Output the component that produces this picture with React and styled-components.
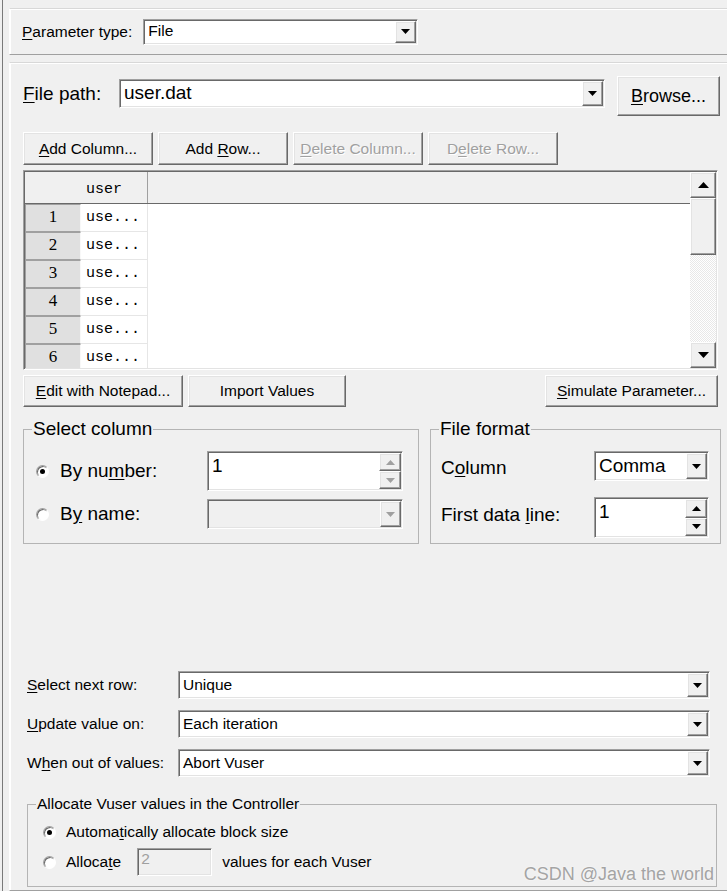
import React from "react";
import styled, { createGlobalStyle, css } from "styled-components";

const GlobalStyle = createGlobalStyle`
  html, body {
    margin: 0;
    padding: 0;
    background: #f0f0f0;
  }
  body {
    font-family: "Liberation Sans", Arial, sans-serif;
    color: #000;
  }
`;

const raised = css`
  border: 1px solid;
  border-color: #ffffff #696969 #696969 #ffffff;
  box-shadow: inset -1px -1px #a0a0a0, inset 1px 1px #e3e3e3;
`;

const sunken = css`
  border: 1px solid;
  border-color: #a0a0a0 #ffffff #ffffff #a0a0a0;
  box-shadow: inset 1px 1px #696969, inset -1px -1px #e3e3e3;
`;

const Window = styled.div`
  position: relative;
  box-sizing: border-box;
  width: 725px;
  height: 891px;
  margin-left: 2px;
  border-left: 1px solid #7a7a7a;
  padding: 8px 0 0 6px;
  overflow: hidden;
  display: flex;
  flex-direction: column;
`;

const Panel = styled.div`
  box-sizing: border-box;
  width: calc(100% + 4px);
  border: 1px solid;
  border-color: #d8d8d8 #a0a0a0 #a0a0a0 #ffffff;
  box-shadow: inset 1px 1px #ffffff;
`;

const TopPanel = styled(Panel)`
  height: 47px;
  display: flex;
  align-items: center;
  padding-left: 12px;
  gap: 11px;
`;

const MainPanel = styled(Panel)`
  flex: 1;
  margin-top: 7px;
  padding: 13px 0 0 13px;
  display: flex;
  flex-direction: column;
`;

const Label = styled.span`
  font-size: ${(p) => p.$size || 15.5}px;
  white-space: nowrap;
  flex: none;
  width: ${(p) => (p.$w ? `${p.$w}px` : "auto")};
`;

const Mn = styled.span`
  text-decoration: underline;
  text-underline-offset: 2px;
`;

const Combo = styled.div`
  ${sunken};
  box-sizing: border-box;
  flex: none;
  display: flex;
  padding: 1px;
  width: ${(p) => p.$w}px;
  height: ${(p) => p.$h}px;
  margin-top: ${(p) => p.$mt || 0}px;
  background: ${(p) => (p.$disabled ? "#f0f0f0" : "#ffffff")};
  font-size: ${(p) => p.$size || 15.5}px;
`;

const ComboValue = styled.div`
  flex: 1;
  display: flex;
  align-items: ${(p) => (p.$top ? "flex-start" : "center")};
  padding: ${(p) => (p.$top ? "2px 0 0 3px" : "0 0 1px 3px")};
  color: ${(p) => (p.$disabled ? "#a0a0a0" : "#000")};
  white-space: nowrap;
  overflow: hidden;
`;

const DropButton = styled.div`
  ${raised};
  box-sizing: border-box;
  width: 21px;
  flex: none;
  background: #f0f0f0;
  display: flex;
  align-items: center;
  justify-content: center;
`;

const SpinColumn = styled.div`
  display: flex;
  flex-direction: column;
  width: 22px;
  flex: none;
`;

const SpinButton = styled(DropButton)`
  width: 22px;
  flex: 1;
`;

const Button = styled.button`
  ${raised};
  box-sizing: border-box;
  flex: none;
  width: ${(p) => p.$w}px;
  height: ${(p) => p.$h || 33}px;
  margin-left: ${(p) => (p.$push ? "auto" : `${p.$ml || 0}px`)};
  padding: 0;
  background: #f0f0f0;
  font-family: "Liberation Sans", Arial, sans-serif;
  font-size: ${(p) => p.$size || 15.5}px;
  color: ${(p) => (p.disabled ? "#a0a0a0" : "#000")};
  text-shadow: ${(p) => (p.disabled ? "1px 1px #ffffff" : "none")};
  white-space: nowrap;
  cursor: default;
`;

const FileRow = styled.div`
  display: flex;
  align-items: flex-start;
  height: 40px;
`;

const BigLabel = styled.span`
  width: 96px;
  height: 29px;
  line-height: 29px;
  margin-top: 3px;
  font-size: 19px;
  flex: none;
`;

const ButtonRow = styled.div`
  display: flex;
  gap: 5px;
  width: 695px;
  margin-top: ${(p) => p.$mt}px;
`;

const GridBox = styled.div`
  ${sunken};
  box-sizing: border-box;
  width: 695px;
  height: 200px;
  margin-top: 5px;
  padding: 1px;
  display: flex;
  background: #ffffff;
  overflow: hidden;
`;

const GridBody = styled.div`
  flex: 1;
  display: flex;
  flex-direction: column;
  overflow: hidden;
`;

const HeaderRow = styled.div`
  display: flex;
  height: 32px;
  flex: none;
  box-sizing: border-box;
  background: #f0f0f0;
  border-bottom: 1px solid #696969;
`;

const CornerCell = styled.div`
  width: 56px;
  flex: none;
`;

const HeadCell = styled.div`
  width: 67px;
  flex: none;
  box-sizing: border-box;
  border-right: 1px solid #a0a0a0;
  padding: 3px 0 0 5px;
  display: flex;
  align-items: center;
  font-family: "Liberation Mono", "Courier New", monospace;
  font-size: 15px;
`;

const DataRow = styled.div`
  display: flex;
  height: 28px;
  flex: none;
`;

const RowHead = styled.div`
  box-sizing: border-box;
  width: 56px;
  flex: none;
  background: #e0e0e0;
  border: 1px solid;
  border-color: #a0a0a0 #f8f8f8 #a0a0a0 #a0a0a0;
  padding-bottom: 3px;
  display: flex;
  align-items: center;
  justify-content: center;
  font-family: "Liberation Serif", "Times New Roman", serif;
  font-size: 17px;
`;

const DataCell = styled.div`
  box-sizing: border-box;
  width: 67px;
  flex: none;
  border-right: 1px solid #e6e6e6;
  border-bottom: 1px solid #e6e6e6;
  padding-left: 5px;
  display: flex;
  align-items: center;
  font-family: "Liberation Mono", "Courier New", monospace;
  font-size: 15px;
`;

const ScrollBar = styled.div`
  width: 26px;
  flex: none;
  display: flex;
  flex-direction: column;
  background-color: #f4f4f4;
  background-image: repeating-conic-gradient(#ffffff 0 25%, #e8e8e8 0 50%);
  background-size: 2px 2px;
`;

const ScrollButton = styled(DropButton)`
  width: 26px;
  height: ${(p) => p.$h || 26}px;
  flex: none;
`;

const ScrollGap = styled.div`
  flex: 1;
`;

const GroupsRow = styled.div`
  display: flex;
  gap: 11px;
  margin-top: 11px;
`;

const GroupBox = styled.fieldset`
  box-sizing: border-box;
  margin: ${(p) => p.$mt || 0}px 0 0 ${(p) => p.$ml || 0}px;
  padding: 0;
  min-width: 0;
  width: ${(p) => p.$w}px;
  height: ${(p) => p.$h}px;
  border: 1px solid #b4b4b4;
  flex: none;
`;

const Legend = styled.legend`
  padding: 0 1px;
  margin-left: 8px;
  font-size: ${(p) => p.$size || 19}px;
  line-height: ${(p) => p.$lh || 22}px;
`;

const FormGrid = styled.div`
  display: grid;
  grid-template-columns: ${(p) => p.$cols};
  grid-template-rows: ${(p) => p.$rows};
  row-gap: ${(p) => p.$gap}px;
  align-items: center;
  padding: 11px 0 0 ${(p) => p.$pl}px;
`;

const RadioLine = styled.label`
  display: flex;
  align-items: center;
  gap: ${(p) => p.$gap || 11}px;
  font-size: ${(p) => p.$size || 19}px;
  white-space: nowrap;
`;

const RadioDot = styled.span`
  box-sizing: border-box;
  width: 13px;
  height: 13px;
  flex: none;
  border-radius: 50%;
  border: 1px solid;
  border-color: #a0a0a0 #ffffff #ffffff #a0a0a0;
  box-shadow: inset 1px 1px #696969;
  background: #ffffff;
  display: flex;
  align-items: center;
  justify-content: center;

  &::after {
    content: "";
    width: 5px;
    height: 5px;
    border-radius: 50%;
    background: ${(p) => (p.$on ? "#000" : "transparent")};
  }
`;

const FieldLabel = styled.span`
  font-size: 19px;
  white-space: nowrap;
  margin-top: ${(p) => p.$mt || 0}px;
`;

const OptionBlock = styled.div`
  display: flex;
  flex-direction: column;
  gap: 11px;
  margin: 127px 0 0 4px;
`;

const OptionRow = styled.div`
  display: flex;
  align-items: center;
`;

const AllocRows = styled.div`
  display: flex;
  flex-direction: column;
  gap: 6px;
  padding: 9px 0 0 15px;
`;

const AllocRow = styled.div`
  display: flex;
  align-items: center;
  height: ${(p) => p.$h}px;
  font-size: 15.5px;
  white-space: nowrap;
`;

const SmallInput = styled.div`
  ${sunken};
  box-sizing: border-box;
  width: 75px;
  height: 28px;
  margin: 0 10px 0 16px;
  padding: 1px 0 0 3px;
  background: #f0f0f0;
  color: #a0a0a0;
  font-size: 15.5px;
`;

const Watermark = styled.div`
  position: absolute;
  right: 13px;
  bottom: 6px;
  font-size: 18px;
  color: #a4a4a4;
  text-shadow: 0 0 2px #ffffff;
  pointer-events: none;
`;

const Arrow = ({ up, disabled, w = 9, h = 5 }) => (
  <svg width={w} height={h} viewBox={`0 0 ${w} ${h}`}>
    <polygon
      points={up ? `0,${h} ${w},${h} ${w / 2},0` : `0,0 ${w},0 ${w / 2},${h}`}
      fill={disabled ? "#a0a0a0" : "#000"}
    />
  </svg>
);

const DropDown = ({ value, w, h, size, mt, disabled }) => (
  <Combo $w={w} $h={h} $size={size} $mt={mt} $disabled={disabled}>
    <ComboValue>{value}</ComboValue>
    <DropButton>
      <Arrow disabled={disabled} />
    </DropButton>
  </Combo>
);

const Spinner = ({ value, w, h, disabled }) => (
  <Combo $w={w} $h={h} $size={19}>
    <ComboValue $top>{value}</ComboValue>
    <SpinColumn>
      <SpinButton>
        <Arrow up disabled={disabled} />
      </SpinButton>
      <SpinButton>
        <Arrow disabled={disabled} />
      </SpinButton>
    </SpinColumn>
  </Combo>
);

const ROWS = [1, 2, 3, 4, 5, 6];

const OPTIONS = [
  { pre: "", key: "S", post: "elect next row:", value: "Unique" },
  { pre: "", key: "U", post: "pdate value on:", value: "Each iteration" },
  { pre: "W", key: "h", post: "en out of values:", value: "Abort Vuser" },
];

export default function App() {
  return (
    <>
      <GlobalStyle />
      <Window>
        <TopPanel>
          <Label>
            <Mn>P</Mn>arameter type:
          </Label>
          <DropDown value="File" w={275} h={26} />
        </TopPanel>

        <MainPanel>
          <FileRow>
            <BigLabel>
              <Mn>F</Mn>ile path:
            </BigLabel>
            <DropDown value="user.dat" w={486} h={29} size={19} mt={3} />
            <Button $w={103} $h={40} $size={18} $ml={12}>
              <Mn>B</Mn>rowse...
            </Button>
          </FileRow>

          <ButtonRow $mt={16}>
            <Button $w={130}>
              <Mn>A</Mn>dd Column...
            </Button>
            <Button $w={130}>
              Add <Mn>R</Mn>ow...
            </Button>
            <Button $w={130} disabled>
              <Mn>D</Mn>elete Column...
            </Button>
            <Button $w={130} disabled>
              D<Mn>e</Mn>lete Row...
            </Button>
          </ButtonRow>

          <GridBox>
            <GridBody>
              <HeaderRow>
                <CornerCell />
                <HeadCell>user</HeadCell>
              </HeaderRow>
              {ROWS.map((n) => (
                <DataRow key={n}>
                  <RowHead>{n}</RowHead>
                  <DataCell>use...</DataCell>
                </DataRow>
              ))}
            </GridBody>
            <ScrollBar>
              <ScrollButton>
                <Arrow up w={11} h={6} />
              </ScrollButton>
              <ScrollButton $h={57} />
              <ScrollGap />
              <ScrollButton>
                <Arrow w={11} h={6} />
              </ScrollButton>
            </ScrollBar>
          </GridBox>

          <ButtonRow $mt={5}>
            <Button $w={160} $h={32}>
              <Mn>E</Mn>dit with Notepad...
            </Button>
            <Button $w={158} $h={32}>
              Import Values
            </Button>
            <Button $w={173} $h={32} $push>
              <Mn>S</Mn>imulate Parameter...
            </Button>
          </ButtonRow>

          <GroupsRow>
            <GroupBox $w={396} $h={126}>
              <Legend>Select column</Legend>
              <FormGrid $cols="171px 196px" $rows="40px 30px" $gap={8} $pl={12}>
                <RadioLine>
                  <RadioDot $on />
                  <span>
                    By nu<Mn>m</Mn>ber:
                  </span>
                </RadioLine>
                <Spinner value="1" w={196} h={40} disabled />
                <RadioLine>
                  <RadioDot />
                  <span>
                    B<Mn>y</Mn> name:
                  </span>
                </RadioLine>
                <DropDown value="" w={196} h={30} disabled />
              </FormGrid>
            </GroupBox>

            <GroupBox $w={291} $h={126}>
              <Legend>File format</Legend>
              <FormGrid $cols="153px 115px" $rows="30px 41px" $gap={16} $pl={10}>
                <FieldLabel $mt={3}>
                  C<Mn>o</Mn>lumn
                </FieldLabel>
                <DropDown value="Comma" w={115} h={30} size={19} />
                <FieldLabel $mt={-6}>
                  First data <Mn>l</Mn>ine:
                </FieldLabel>
                <Spinner value="1" w={115} h={41} />
              </FormGrid>
            </GroupBox>
          </GroupsRow>

          <OptionBlock>
            {OPTIONS.map((o) => (
              <OptionRow key={o.value}>
                <Label $w={151}>
                  {o.pre}
                  <Mn>{o.key}</Mn>
                  {o.post}
                </Label>
                <DropDown value={o.value} w={532} h={28} />
              </OptionRow>
            ))}
          </OptionBlock>

          <GroupBox $w={690} $h={92} $ml={4} $mt={18}>
            <Legend $size={15.5} $lh={18}>
              Allocate Vuser values in the Controller
            </Legend>
            <AllocRows>
              <AllocRow $h={20}>
                <RadioLine $gap={10} $size={15.5}>
                  <RadioDot $on />
                  <span>
                    Automa<Mn>t</Mn>ically allocate block size
                  </span>
                </RadioLine>
              </AllocRow>
              <AllocRow $h={28}>
                <RadioLine $gap={10} $size={15.5}>
                  <RadioDot />
                  <span>
                    Alloca<Mn>t</Mn>e
                  </span>
                </RadioLine>
                <SmallInput>2</SmallInput>
                <span>values for each Vuser</span>
              </AllocRow>
            </AllocRows>
          </GroupBox>
        </MainPanel>

        <Watermark>CSDN @Java the world</Watermark>
      </Window>
    </>
  );
}
